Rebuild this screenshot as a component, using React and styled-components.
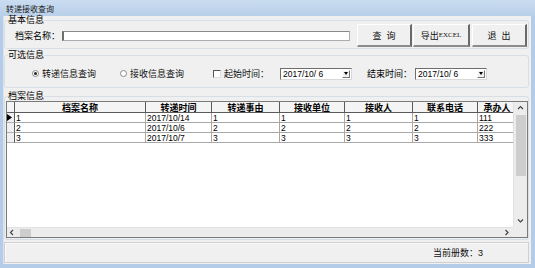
import styled, { createGlobalStyle } from "styled-components";

const GlobalStyle = createGlobalStyle`
  html, body {
    margin: 0;
    padding: 0;
    background: #ffffff;
  }
  body {
    font-family: "Liberation Sans", "Noto Sans CJK SC", sans-serif;
    font-size: 9px;
    color: #000;
  }
`;

const Window = styled.div`
  width: 535px;
  height: 268px;
  display: flex;
  flex-direction: column;
  background: #b4cce8;
`;

const TitleBar = styled.div`
  height: 16px;
  flex: none;
  display: flex;
  align-items: center;
  padding-left: 6px;
  font-size: 8px;
  color: #1a1a1a;
  background: linear-gradient(#c9dcf0, #b9d0ea);
`;

const Frame = styled.div`
  flex: 1;
  display: flex;
  padding: 0 4px 4px 3px;
  min-height: 0;
`;

const Body = styled.div`
  flex: 1;
  display: flex;
  flex-direction: column;
  background: #f0f0f0;
  padding: 0 0 1px 0;
  box-shadow: inset 1px 0 #d8e4f2;
`;

const Group = styled.fieldset`
  margin: ${(p) => p.$mt || 0}px 2px 0 1px;
  padding: ${(p) => p.$pad};
  border: 1px solid #d5dfe5;
  border-radius: 3px;
  min-width: 0;
`;

const Legend = styled.legend`
  margin-left: ${(p) => p.$ml || 3}px;
  padding: 0;
  line-height: 8px;
  font-size: 9px;
`;

const Row = styled.div`
  display: flex;
  align-items: center;
  height: ${(p) => p.$h}px;
  padding-left: ${(p) => p.$pl}px;
`;

const FieldLabel = styled.span`
  width: ${(p) => p.$w}px;
  margin-left: ${(p) => p.$ml || 0}px;
  white-space: nowrap;
  flex: none;
`;

const TextInput = styled.div`
  width: 288px;
  height: 10px;
  box-sizing: border-box;
  background: #fff;
  border: 1px solid #abadb3;
  border-left: 2px solid #6e6e6e;
  border-top-color: #8a8a8a;
`;

const Button = styled.div`
  width: ${(p) => p.$w}px;
  height: 23px;
  margin-left: ${(p) => p.$ml}px;
  box-sizing: border-box;
  display: flex;
  align-items: center;
  justify-content: center;
  background: #f0f0f0;
  border-top: 1px solid #ffffff;
  border-left: 1px solid #ffffff;
  border-right: 2px solid #6a6a6a;
  border-bottom: 2px solid #8c8c8c;
  letter-spacing: ${(p) => (p.$spaced ? "5px" : "0")};
  padding-left: ${(p) => (p.$spaced ? "5px" : "0")};
  font-size: 9px;
  white-space: nowrap;
  color: #111;
`;

const SmallCaps = styled.span`
  font-family: "Liberation Serif", serif;
  font-size: 7px;
`;

const Option = styled.div`
  display: flex;
  align-items: center;
  margin-left: ${(p) => p.$ml || 0}px;
  white-space: nowrap;
  color: #111;
`;

const Radio = styled.span`
  width: 5px;
  height: 5px;
  border-radius: 50%;
  border: 1px solid #8a8a8a;
  background: #fff;
  margin-right: 3px;
  display: grid;
  place-items: center;
  &::after {
    content: "";
    width: 3px;
    height: 3px;
    border-radius: 50%;
    background: ${(p) => (p.$checked ? "#222" : "transparent")};
  }
`;

const Check = styled.span`
  width: 6px;
  height: 6px;
  background: #fff;
  border-top: 1px solid #555;
  border-left: 1px solid #555;
  border-right: 1px solid #e0e0e0;
  border-bottom: 1px solid #e0e0e0;
  margin-right: 3px;
`;

const DateBox = styled.div`
  width: 72px;
  height: 12px;
  margin-left: ${(p) => p.$ml}px;
  box-sizing: border-box;
  display: flex;
  align-items: center;
  justify-content: space-between;
  background: #fff;
  border-top: 1px solid #6e6e6e;
  border-left: 1px solid #6e6e6e;
  border-right: 1px solid #d8d8d8;
  border-bottom: 1px solid #d8d8d8;
  padding: 0 1px 0 2px;
  white-space: pre;
  font-size: 8.5px;
`;

const DropBtn = styled.span`
  width: 8px;
  height: 8px;
  box-sizing: border-box;
  display: grid;
  place-items: center;
  background: #f0f0f0;
  border-right: 1px solid #777;
  border-bottom: 1px solid #777;
  border-top: 1px solid #fff;
  border-left: 1px solid #fff;
`;

const GridBox = styled.div`
  height: 137px;
  margin-left: 1px;
  box-sizing: border-box;
  border: 1px solid #7a7a7a;
  background: #fff;
  display: grid;
  grid-template-columns: 1fr 14px;
  grid-template-rows: 1fr 10px;
`;

const TableArea = styled.div`
  overflow: hidden;
`;

const COLS = "8px 131px 66px 68px 65px 68px 65px 39px";

const HeadRow = styled.div`
  display: grid;
  grid-template-columns: ${COLS};
  height: 11px;
  background: #f4f4f4;
  border-bottom: 1px solid #5a5a5a;
  box-sizing: border-box;
`;

const HeadCell = styled.div`
  border-right: 1px solid #5a5a5a;
  display: flex;
  align-items: center;
  justify-content: center;
  font-weight: bold;
  font-size: 9px;
  white-space: nowrap;
  overflow: hidden;
`;

const DataRow = styled.div`
  display: grid;
  grid-template-columns: ${COLS};
  height: 10px;
`;

const RowHead = styled.div`
  background: #f0f0f0;
  border-right: 1px solid #5a5a5a;
  border-bottom: 1px solid #b0b0b0;
  box-sizing: border-box;
  display: grid;
  place-items: center start;
`;

const Cell = styled.div`
  border-right: 1px solid #a8a8a8;
  border-bottom: 1px solid #a8a8a8;
  box-sizing: border-box;
  padding-left: 1px;
  display: flex;
  align-items: center;
  font-size: 8.5px;
  white-space: nowrap;
  overflow: hidden;
`;

const VScroll = styled.div`
  background: #ececec;
  border-left: 1px solid #e2e2e2;
  display: flex;
  flex-direction: column;
  align-items: center;
  padding: 3px 0 2px;
`;

const VThumb = styled.div`
  width: 10px;
  height: 61px;
  margin-top: 3px;
  background: #cdcdcd;
`;

const HScroll = styled.div`
  background: #ececec;
  border-top: 1px solid #e2e2e2;
  display: flex;
  align-items: center;
  padding: 0 2px 0 2px;
`;

const HThumb = styled.div`
  width: 11px;
  height: 8px;
  margin-left: 4px;
  background: #cdcdcd;
`;

const Spacer = styled.div`
  flex: 1;
`;

const Corner = styled.div`
  background: #ececec;
`;

const StatusBar = styled.div`
  height: 21px;
  margin: 2px 2px 0 1px;
  box-sizing: border-box;
  border: 1px solid #cfcfcf;
  box-shadow: inset 1px 1px #fafafa;
  display: flex;
  align-items: center;
  justify-content: flex-end;
  padding-right: 45px;
  color: #111;
`;

const Chevron = ({ dir }) => {
  const d = {
    up: "M1 4 L3.5 1.5 L6 4",
    down: "M1 1.5 L3.5 4 L6 1.5",
    left: "M4 1 L1.5 3.5 L4 6",
    right: "M1.5 1 L4 3.5 L1.5 6",
  }[dir];
  return (
    <svg width="7" height="7" viewBox="0 0 7 7">
      <path d={d} fill="none" stroke="#444" strokeWidth="1.2" />
    </svg>
  );
};

const Tri = () => (
  <svg width="4" height="3" viewBox="0 0 4 3">
    <path d="M0 0 H4 L2 3 Z" fill="#000" />
  </svg>
);

const Pointer = () => (
  <svg width="5" height="7" viewBox="0 0 5 7">
    <path d="M0 0 L5 3.5 L0 7 Z" fill="#000" />
  </svg>
);

const headers = ["档案名称", "转递时间", "转递事由", "接收单位", "接收人", "联系电话", "承办人"];

const rows = [
  ["1", "2017/10/14", "1", "1", "1", "1", "111"],
  ["2", "2017/10/6", "2", "2", "2", "2", "222"],
  ["3", "2017/10/7", "3", "3", "3", "3", "333"],
];

export default function App() {
  return (
    <>
      <GlobalStyle />
      <Window>
        <TitleBar>转递接收查询</TitleBar>
        <Frame>
          <Body>
            <Group $pad="0 0 1px 0">
              <Legend $ml={3}>基本信息</Legend>
              <Row $h={23} $pl={10}>
                <FieldLabel $w={47}>档案名称：</FieldLabel>
                <TextInput />
                <Button $w={55} $ml={7} $spaced>查询</Button>
                <Button $w={57} $ml={1}>
                  导出<SmallCaps>EXCEL</SmallCaps>
                </Button>
                <Button $w={55} $ml={2} $spaced>退出</Button>
              </Row>
            </Group>

            <Group $mt={2} $pad="8px 0 7px 0">
              <Legend $ml={0}>可选信息</Legend>
              <Row $h={13} $pl={27}>
                <Option>
                  <Radio $checked />
                  转递信息查询
                </Option>
                <Option $ml={24}>
                  <Radio />
                  接收信息查询
                </Option>
                <Option $ml={29}>
                  <Check />
                  起始时间：
                </Option>
                <DateBox $ml={11}>
                  2017/10/ 6
                  <DropBtn>
                    <Tri />
                  </DropBtn>
                </DateBox>
                <FieldLabel $w={48} $ml={15}>结束时间：</FieldLabel>
                <DateBox $ml={0}>
                  2017/10/ 6
                  <DropBtn>
                    <Tri />
                  </DropBtn>
                </DateBox>
              </Row>
            </Group>

            <Group $mt={4} $pad="1px 0 1px 0">
              <Legend $ml={3}>档案信息</Legend>
              <GridBox>
                <TableArea>
                  <HeadRow>
                    <HeadCell />
                    {headers.map((h) => (
                      <HeadCell key={h}>{h}</HeadCell>
                    ))}
                  </HeadRow>
                  {rows.map((r, i) => (
                    <DataRow key={i}>
                      <RowHead>{i === 0 && <Pointer />}</RowHead>
                      {r.map((v, j) => (
                        <Cell key={j}>{v}</Cell>
                      ))}
                    </DataRow>
                  ))}
                </TableArea>
                <VScroll>
                  <Chevron dir="up" />
                  <VThumb />
                  <Spacer />
                  <Chevron dir="down" />
                </VScroll>
                <HScroll>
                  <Chevron dir="left" />
                  <HThumb />
                  <Spacer />
                  <Chevron dir="right" />
                </HScroll>
                <Corner />
              </GridBox>
            </Group>

            <StatusBar>当前册数：3</StatusBar>
          </Body>
        </Frame>
      </Window>
    </>
  );
}
